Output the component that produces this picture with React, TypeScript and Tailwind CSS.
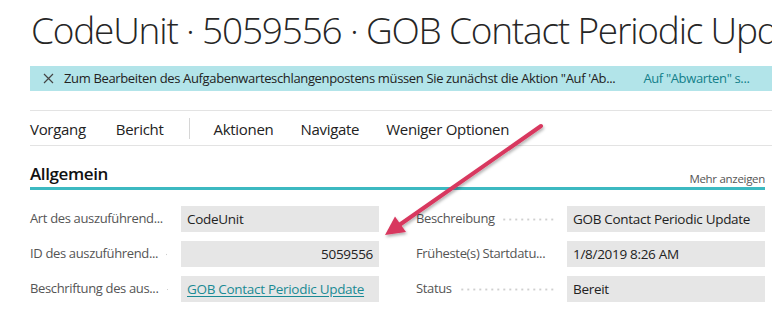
import React from "react";

const font = "font-['Open_Sans','Noto_Sans',sans-serif]";

type Field = { label: string; value: string; align?: "right"; link?: boolean };

const left: Field[] = [
  { label: "Art des auszuführend...", value: "CodeUnit" },
  { label: "ID des auszuführend...", value: "5059556", align: "right" },
  { label: "Beschriftung des aus...", value: "GOB Contact Periodic Update", link: true },
];

const right: Field[] = [
  { label: "Beschreibung", value: "GOB Contact Periodic Update" },
  { label: "Früheste(s) Startdatu...", value: "1/8/2019 8:26 AM" },
  { label: "Status", value: "Bereit" },
];

function FieldRow({ f }: { f: Field }) {
  return (
    <div className="flex items-center h-[26px]">
      <div className="flex items-center w-[151px] pr-[12px] min-w-0">
        <span className="text-[13px] tracking-[-0.35px] text-[#555] whitespace-nowrap">{f.label}</span>
        <span className="flex-1 h-[3px] ml-[8px] bg-[radial-gradient(circle,#cfcfcf_1px,transparent_1.2px)] bg-[length:6px_3px] bg-right" />
      </div>
      <div
        className={`w-[198px] h-[26px] bg-[#e6e6e6] flex items-center px-[6px] text-[13.5px] tracking-[-0.3px] text-[#222] whitespace-nowrap ${
          f.align === "right" ? "justify-end" : ""
        }`}
      >
        {f.link ? (
          <span className="text-[#1a8a94] underline underline-offset-2">{f.value}</span>
        ) : (
          f.value
        )}
      </div>
    </div>
  );
}

export default function App() {
  return (
    <div className={`relative w-[772px] h-[334px] overflow-hidden bg-white ${font}`}>
      <h1 className="pl-[31px] pt-[5px] h-[60px] text-[37px] tracking-[-1.2px] font-light text-[#262626] whitespace-nowrap leading-[50px]">
        CodeUnit · 5059556 · GOB Contact Periodic Update
      </h1>

      <div className="ml-[30px] mt-[6px] h-[25px] bg-[#b2e4e9] flex items-center text-[13px] tracking-[-0.35px] text-[#222] whitespace-nowrap">
        <span className="ml-[13px] mr-[10px] text-[#444]">
          <svg width="11" height="11" viewBox="0 0 11 11">
            <path d="M1 1 L10 10 M10 1 L1 10" stroke="#444" strokeWidth="1.2" />
          </svg>
        </span>
        <span>Zum Bearbeiten des Aufgabenwarteschlangenpostens müssen Sie zunächst die Aktion "Auf 'Ab...</span>
        <span className="ml-[28px] text-[#12808a]">Auf "Abwarten" s...</span>
      </div>

      <div className="ml-[30px] mt-[19px] h-[36px] border-t border-b border-[#e3e3e3] flex items-center text-[15px] tracking-[-0.3px] text-[#222] whitespace-nowrap">
        <span className="pt-[2px]">Vorgang</span>
        <span className="ml-[30px] pt-[2px]">Bericht</span>
        <span className="ml-[25px] w-px h-[21px] bg-[#d6d6d6]" />
        <span className="ml-[24px] pt-[2px]">Aktionen</span>
        <span className="ml-[27px] pt-[2px]">Navigate</span>
        <span className="ml-[27px] pt-[2px]">Weniger Optionen</span>
      </div>

      <div className="ml-[30px] mr-[7px] mt-[16px] h-[28px] border-b-[3px] border-[#3cb9c1] flex items-start justify-between">
        <span className="text-[17px] tracking-[-0.4px] font-semibold text-[#111] leading-[24px]">Allgemein</span>
        <span className="text-[11.5px] tracking-[-0.3px] text-[#555] mt-[8px]">Mehr anzeigen</span>
      </div>

      <div className="ml-[30px] mt-[16px] flex gap-[37px]">
        <div className="flex flex-col gap-[9px]">
          {left.map((f) => (
            <FieldRow key={f.label} f={f} />
          ))}
        </div>
        <div className="flex flex-col gap-[9px]">
          {right.map((f) => (
            <FieldRow key={f.label} f={f} />
          ))}
        </div>
      </div>

      <svg className="absolute left-0 top-0 pointer-events-none" width="772" height="334">
        <defs>
          <filter id="sh" x="-20%" y="-20%" width="140%" height="140%">
            <feDropShadow dx="1" dy="2" stdDeviation="1.5" floodColor="#000" floodOpacity="0.3" />
          </filter>
        </defs>
        <g filter="url(#sh)">
          <line x1="541" y1="126" x2="400" y2="224.5" stroke="#d8385e" strokeWidth="4" strokeLinecap="round" />
          <polygon points="385,235 406,232 395,216.5" fill="#d8385e" />
        </g>
      </svg>
    </div>
  );
}
